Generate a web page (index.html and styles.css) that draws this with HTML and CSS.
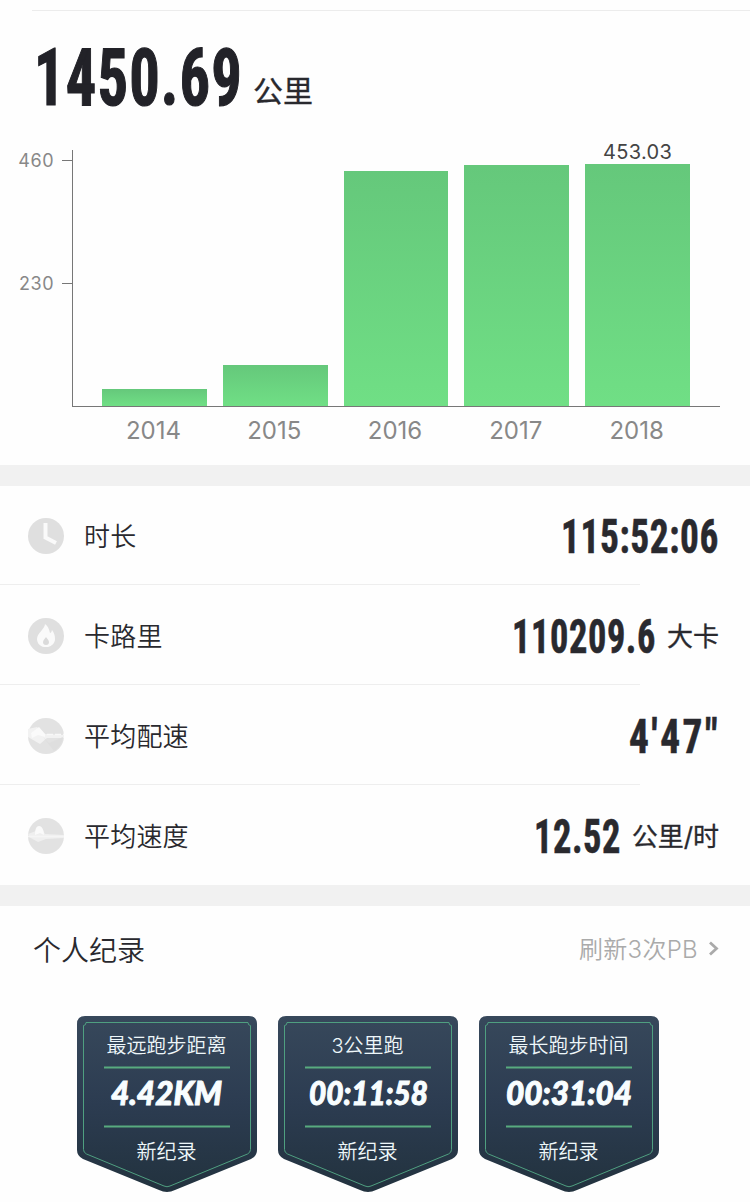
FILE: index.html
```html
<!DOCTYPE html>
<html lang="zh-CN">
<head>
    <meta charset="UTF-8">
    <meta name="viewport" content="width=device-width, initial-scale=1.0">
    <title>跑步记录</title>
    <link rel="stylesheet" href="styles.css">
</head>
<body>
    <section class="summary">
        <div class="total">
            <svg class="total-number" width="208" height="64"><text x="-1" y="59" textLength="209" lengthAdjust="spacingAndGlyphs">1450.69</text></svg>
            <span class="total-unit">公里</span>
        </div>

        <div class="chart">
            <div class="y-axis">
                <div class="y-label">460</div>
                <div class="y-label">230</div>
            </div>
            <div class="plot">
                <div class="bar" style="height: 17px"></div>
                <div class="bar" style="height: 41px"></div>
                <div class="bar" style="height: 235px"></div>
                <div class="bar" style="height: 241px"></div>
                <div class="bar" style="height: 242px"><span class="bar-value">453.03</span></div>
            </div>
        </div>
        <div class="x-axis">
            <span>2014</span>
            <span>2015</span>
            <span>2016</span>
            <span>2017</span>
            <span>2018</span>
        </div>
    </section>

    <section class="stats">
        <div class="stat">
            <svg class="stat-icon" viewBox="0 0 36 36">
                <circle cx="18" cy="18" r="18" fill="#dfdfdf"/>
                <path d="M17.500 5v14.500l10.500 5.500" fill="none" stroke="#fafafa" stroke-width="4"/>
            </svg>
            <span class="stat-name">时长</span>
            <svg class="number" width="158" height="40"><text x="0" y="37" textLength="158" lengthAdjust="spacingAndGlyphs">115:52:06</text></svg>
        </div>
        <div class="stat">
            <svg class="stat-icon" viewBox="0 0 36 36">
                <circle cx="18" cy="18" r="18" fill="#dfdfdf"/>
                <path d="M17 6c0 5-8 9-8 15 0 4 3 7.500 7 8h4c4-1 7-4 7-8 0-4-1-6-3-9-.5 2-1 3-2 3-1-4-2-7-5-9z" fill="#fafafa"/>
                <path d="M18 19c-1 2-3 3-3 5a3 3 0 0 0 6 0c0-2-2-3-3-5z" fill="#dadada"/>
            </svg>
            <span class="stat-name">卡路里</span>
            <svg class="number" width="144" height="40"><text x="0" y="37" textLength="144" lengthAdjust="spacingAndGlyphs">110209.6</text></svg>
            <span class="unit">大卡</span>
        </div>
        <div class="stat">
            <svg class="stat-icon" viewBox="0 0 36 36">
                <circle cx="18" cy="18" r="18" fill="#e2e2e2"/>
                <path d="M0 11L9 9l8 7 19 1v3H19l-7 6L0 19z" fill="#f2f2f2"/>
                <path d="M3 15l8-6 6 7v3l-7-2-6 3z" fill="#fafafa"/>
                <path d="M19 16.500h17" stroke="#f8f8f8" stroke-width="1.500" stroke-dasharray="6 2"/>
                <path d="M15 19l6 6 14-6a18 18 0 0 1-9 14z" fill="#dedede"/>
            </svg>
            <span class="stat-name">平均配速</span>
            <svg class="number wide" width="90" height="40"><text x="0" y="37" textLength="91" lengthAdjust="spacingAndGlyphs">4'47"</text></svg>
        </div>
        <div class="stat">
            <svg class="stat-icon" viewBox="0 0 36 36">
                <circle cx="18" cy="18" r="18" fill="#e2e2e2"/>
                <path d="M0 16l8-3 4-5 5 8 19 1v3l-18 1-8 3-9-5z" fill="#efefef"/>
                <path d="M7 17c0-5 1-9 4-9s5 4 5 9l-4-2z" fill="#fafafa"/>
                <path d="M0 18.500h36" stroke="#f5f5f5" stroke-width="1.500"/>
            </svg>
            <span class="stat-name">平均速度</span>
            <svg class="number" width="87" height="40"><text x="0" y="37" textLength="87" lengthAdjust="spacingAndGlyphs">12.52</text></svg>
            <span class="unit">公里/时</span>
        </div>
    </section>

    <section class="records">
        <div class="records-head">
            <h2>个人纪录</h2>
            <span class="records-more">刷新3次PB</span>
            <svg class="chevron" width="11" height="16" viewBox="0 0 11 16"><path d="M2 1.500L8.500 7.500 2 13.500" fill="none" stroke="#aaa" stroke-width="2.800"/></svg>
        </div>

        <!-- shared badge outline -->
        <svg class="defs" width="0" height="0">
            <defs>
                <linearGradient id="badge-fill" x1="0" y1="0" x2="0" y2="1">
                    <stop offset="0" stop-color="#37485b"/>
                    <stop offset=".5" stop-color="#2c3c51"/>
                    <stop offset="1" stop-color="#22323e"/>
                </linearGradient>
                <symbol id="badge-shape" viewBox="0 0 180 176">
                    <path d="M8 0h164q8 0 8 8v126q0 6-6 9l-76 31q-8 4-16 0L6 143q-6-3-6-9V8q0-8 8-8z" fill="url(#badge-fill)"/>
                    <path d="M9 6.500h162q0 3 2.500 3v124q0 3-3 4.500L93 170q-3 1.500-6 0L9.500 138q-3-1.500-3-4.500v-124q2.500 0 2.500-3z" fill="none" stroke="#4f9f80"/>
                    <path d="M27 51.500h126M27 110.500h126" stroke="#58ab7f" stroke-width="2"/>
                </symbol>
            </defs>
        </svg>

        <div class="badges">
            <div class="badge">
                <svg class="badge-bg"><use href="#badge-shape"/></svg>
                <div class="badge-body">
                    <span class="badge-title">最远跑步距离</span>
                    <svg class="badge-number" width="126" height="30"><text x="7" y="26" textLength="111" lengthAdjust="spacingAndGlyphs">4.42KM</text></svg>
                    <span class="badge-note">新纪录</span>
                </div>
            </div>
            <div class="badge">
                <svg class="badge-bg"><use href="#badge-shape"/></svg>
                <div class="badge-body">
                    <span class="badge-title">3公里跑</span>
                    <svg class="badge-number" width="126" height="30"><text x="4" y="26" textLength="119" lengthAdjust="spacingAndGlyphs">00:11:58</text></svg>
                    <span class="badge-note">新纪录</span>
                </div>
            </div>
            <div class="badge">
                <svg class="badge-bg"><use href="#badge-shape"/></svg>
                <div class="badge-body">
                    <span class="badge-title">最长跑步时间</span>
                    <svg class="badge-number" width="126" height="30"><text x="0" y="26" textLength="126" lengthAdjust="spacingAndGlyphs">00:31:04</text></svg>
                    <span class="badge-note">新纪录</span>
                </div>
            </div>
        </div>
    </section>
</body>
</html>
```
FILE: styles.css
```css
* {
    box-sizing: border-box;
}
body {
    margin: 0;
    width: 750px;
    height: 1202px;
    overflow: hidden;
    background-color: #fefefe;
    color: #29292e;
    font-family: Inter, "Noto Sans CJK SC", sans-serif;
}
svg {
    display: block;
    flex: none;
    overflow: visible;
}
.summary {
    height: 465px;
    padding-top: 10px;
}
.total {
    display: flex;
    align-items: flex-start;
    height: 140px;
    margin-left: 32px;
    padding: 35px 0 0 3px;
    border-top: 1px solid #ececec;
}
.total-number {
    fill: #222228;
    font: 700 80px Roboto, sans-serif;
    font-stretch: 75%;
    letter-spacing: 1.5px;
    stroke: #222228;
    stroke-width: 1.2px;
}
.total-unit {
    margin: 25px 0 0 10px;
    font-size: 30px;
    line-height: 40px;
    -webkit-text-stroke: 0.3px #29292e;
}
.chart {
    display: flex;
    height: 257px;
}
.y-axis {
    display: flex;
    flex-direction: column;
    gap: 103px;
    width: 72px;
}
.y-label {
    display: flex;
    align-items: center;
    justify-content: flex-end;
    gap: 8px;
    height: 20px;
    color: #888;
    font-size: 18px;
    letter-spacing: 0.5px;
}
.y-label::after {
    content: "";
    width: 10px;
    height: 1px;
    background-color: #777;
}
.plot {
    display: flex;
    align-items: flex-end;
    gap: 16px;
    width: 648px;
    padding: 0 30px 0 29px;
    border-left: 1px solid #777;
    border-bottom: 1px solid #777;
}
.bar {
    flex: 1;
    background: linear-gradient(#65c87b, #70df85);
}
.bar-value {
    display: block;
    margin-top: -24px;
    color: #444;
    font-size: 20px;
    line-height: 24px;
    letter-spacing: 0.3px;
    text-align: center;
}
.x-axis {
    display: flex;
    gap: 16px;
    padding: 8px 61px 0 101px;
    color: #888;
    font-size: 24px;
    line-height: 31px;
}
.x-axis span {
    flex: 1;
    text-align: center;
}
.stats {
    border-top: 21px solid #f1f1f1;
    border-bottom: 21px solid #f1f1f1;
    height: 441px;
}
.stat {
    display: flex;
    align-items: center;
    height: 100px;
    padding: 0 31px 0 28px;
    background: linear-gradient(#eee, #eee) 0 98px / 640px 1px no-repeat;
}
.stat:last-child {
    background: none;
}
.stat-icon {
    width: 36px;
    height: 36px;
}
.stat-name {
    margin: 0 auto 0 20px;
    padding-bottom: 3px;
    font-size: 26px;
    font-weight: 350;
    letter-spacing: 0.2px;
}
.number {
    fill: #29292e;
    font: 700 48px Roboto, sans-serif;
    font-stretch: 75%;
    letter-spacing: 0.8px;
    stroke: #29292e;
    stroke-width: 0.6px;
}
.wide {
    letter-spacing: 3px;
}
.unit {
    margin-left: 11px;
    padding-bottom: 3px;
    font-size: 26px;
    -webkit-text-stroke: 0.3px #29292e;
}
.records-head {
    display: flex;
    align-items: center;
    height: 86px;
    padding: 0 31px 0 33px;
}
.records-head h2 {
    margin: 0 auto 0 0;
    font-size: 28px;
    font-weight: 350;
}
.records-more {
    margin-right: 10px;
    padding-bottom: 4px;
    color: #aaa;
    font-size: 24px;
    font-weight: 350;
    letter-spacing: 0.3px;
}
.badges {
    display: flex;
    gap: 21px;
    padding: 24px 0 0 77px;
}
.badge {
    display: grid;
    width: 180px;
    height: 176px;
}
.badge-bg,
.badge-body {
    grid-area: 1 / 1;
    width: 180px;
    height: 176px;
}
.badge-body {
    display: flex;
    flex-direction: column;
    align-items: center;
    padding: 15px 1px 0 0;
    color: #eef7fa;
    font-size: 20px;
    font-weight: 350;
    line-height: 30px;
}
.badge-number {
    margin: 18px 0 28px;
    fill: #f8fdff;
    font: italic 900 32px Lato, sans-serif;
    stroke: #f8fdff;
    stroke-width: 1px;
}
```
